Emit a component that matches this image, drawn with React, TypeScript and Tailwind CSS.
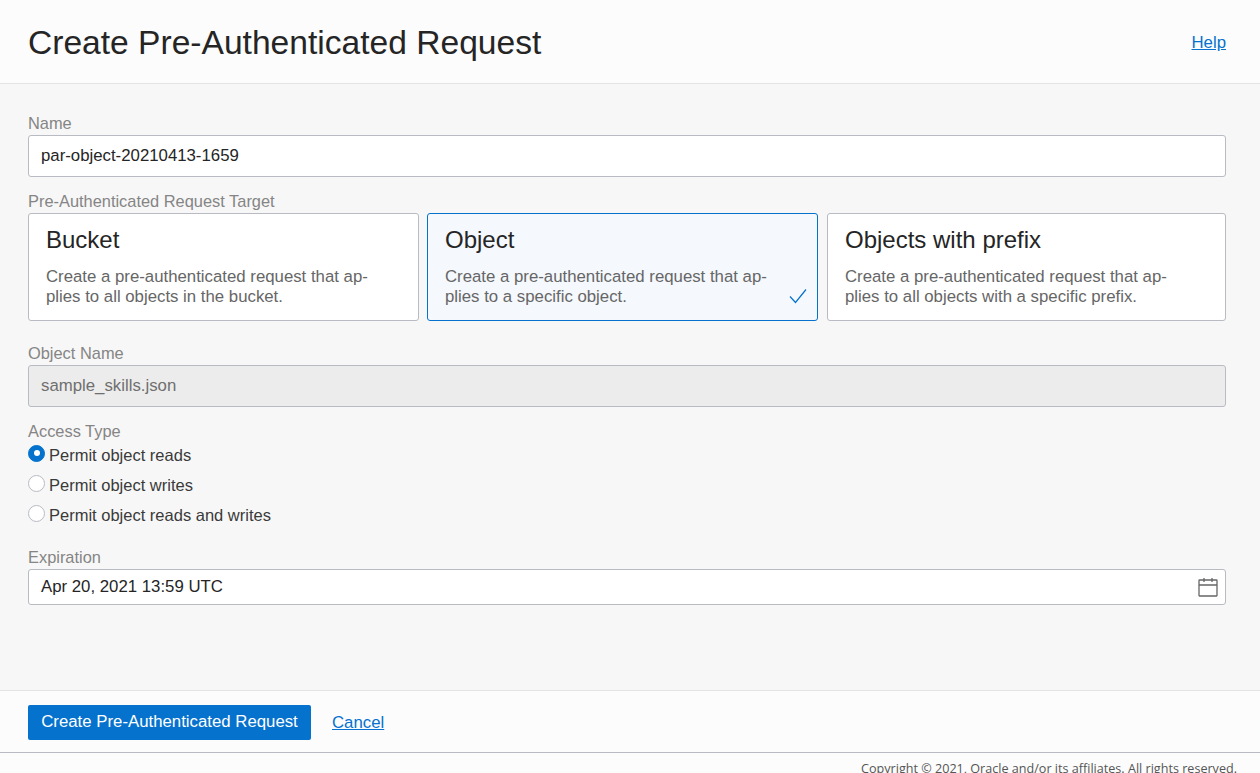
const font = "font-['Liberation_Sans',Arial,sans-serif]";

function Card({ title, line1, line2, selected, className }: { title: string; line1: string; line2: string; selected?: boolean; className: string }) {
  return (
    <div className={`relative h-[108px] shrink-0 rounded-[3px] border pl-[17px] pt-[11px] ${selected ? "border-[#0572ce] bg-[#f5f8fd]" : "border-[#b8bbc2] bg-white"} ${className}`}>
      <div className="text-[24px] leading-[30px] text-[#252525]">{title}</div>
      <div className="mt-[12px] text-[16.8px] leading-[20px] text-[#666666]">
        <div>{line1}</div>
        <div>{line2}</div>
      </div>
      {selected && (
        <svg className="absolute bottom-[16px] right-[10px]" width="18" height="16" viewBox="0 0 18 16" fill="none" stroke="#0572ce" strokeWidth="1.2">
          <path d="M1 8.5 L6.5 14.5 L17 1.5" />
        </svg>
      )}
    </div>
  );
}

function Radio({ label, checked }: { label: string; checked?: boolean }) {
  return (
    <div className="flex h-[30px] items-center">
      <span className={`-mt-[2px] flex h-[17px] w-[17px] items-center justify-center rounded-full border ${checked ? "border-[#0572ce] bg-[#0572ce]" : "border-[#b8bbc2] bg-white"}`}>
        {checked && <span className="h-[6px] w-[6px] rounded-full bg-white" />}
      </span>
      <span className="ml-[4px] pt-[2px] text-[16.5px] leading-[24px] text-[#3a3a3a]">{label}</span>
    </div>
  );
}

export default function App() {
  return (
    <div className={`flex h-[773px] w-[1260px] flex-col overflow-hidden bg-[#fcfcfc] ${font}`}>
      <div className="h-px bg-[#16283a]" />
      <header className="flex h-[84px] shrink-0 items-center justify-between border-b border-[#e3e3e3] bg-[#fcfcfc] pl-[28px] pr-[34px]">
        <h1 className="pt-[2px] text-[33.6px] leading-[44px] text-[#252525]">Create Pre-Authenticated Request</h1>
        <a className="pt-[2px] text-[16.8px] text-[#0572ce] underline">Help</a>
      </header>
      <main className="flex h-[606px] shrink-0 flex-col bg-[#f7f7f7] pl-[28px] pr-[34px] pt-[29px]">
        <div className="h-[22px] text-[16.4px] leading-[20px] text-[#858585]">Name</div>
        <div className="flex h-[42px] items-center rounded-[3px] border border-[#b8bbc2] bg-white pl-[12px] text-[16.8px] text-[#252525]">par-object-20210413-1659</div>
        <div className="mt-[14px] h-[22px] text-[16.4px] leading-[20px] text-[#858585]">Pre-Authenticated Request Target</div>
        <div className="flex gap-[8px]">
          <Card className="w-[391px]" title="Bucket" line1="Create a pre-authenticated request that ap-" line2="plies to all objects in the bucket." />
          <Card className="w-[391px]" selected title="Object" line1="Create a pre-authenticated request that ap-" line2="plies to a specific object." />
          <Card className="ml-px w-[399px]" title="Objects with prefix" line1="Create a pre-authenticated request that ap-" line2="plies to all objects with a specific prefix." />
        </div>
        <div className="mt-[22px] h-[22px] text-[16.4px] leading-[20px] text-[#858585]">Object Name</div>
        <div className="flex h-[42px] items-center rounded-[3px] border border-[#b8bbc2] bg-[#ececec] pl-[12px] text-[16.8px] text-[#6f6f6f]">sample_skills.json</div>
        <div className="mt-[14px] h-[22px] text-[16.4px] leading-[20px] text-[#858585]">Access Type</div>
        <div className="-mt-[4px]">
          <Radio checked label="Permit object reads" />
          <Radio label="Permit object writes" />
          <Radio label="Permit object reads and writes" />
        </div>
        <div className="mt-[18px] h-[22px] text-[16.4px] leading-[20px] text-[#858585]">Expiration</div>
        <div className="flex h-[36px] items-center justify-between rounded-[3px] border border-[#b8bbc2] bg-white pl-[12px] pr-[7px] text-[16.8px] text-[#252525]">
          <span>Apr 20, 2021 13:59 UTC</span>
          <svg width="20" height="20" viewBox="0 0 20 20" fill="none" stroke="#666666" strokeWidth="1.3">
            <rect x="1" y="3" width="18" height="16" rx="0.5" />
            <path d="M1 8h18M6 1v4M14 1v4" />
          </svg>
        </div>
      </main>
      <footer className="flex h-[63px] shrink-0 items-center border-y border-t-[#e3e3e3] border-b-[#b8bbc2] bg-[#fcfcfc] pl-[28px]">
        <button className="mt-[1px] h-[35px] w-[283px] rounded-[2px] bg-[#0572ce] text-[16.8px] text-white">Create Pre-Authenticated Request</button>
        <a className="ml-[21px] pt-[2px] text-[16.8px] text-[#0572ce] underline">Cancel</a>
      </footer>
      <div className="flex flex-1 justify-end pr-[23px] pt-[8px] font-['Open_Sans',sans-serif] text-[12.6px] leading-[16px] whitespace-nowrap text-[#555555]">
        Copyright © 2021, Oracle and/or its affiliates. All rights reserved.
      </div>
    </div>
  );
}
